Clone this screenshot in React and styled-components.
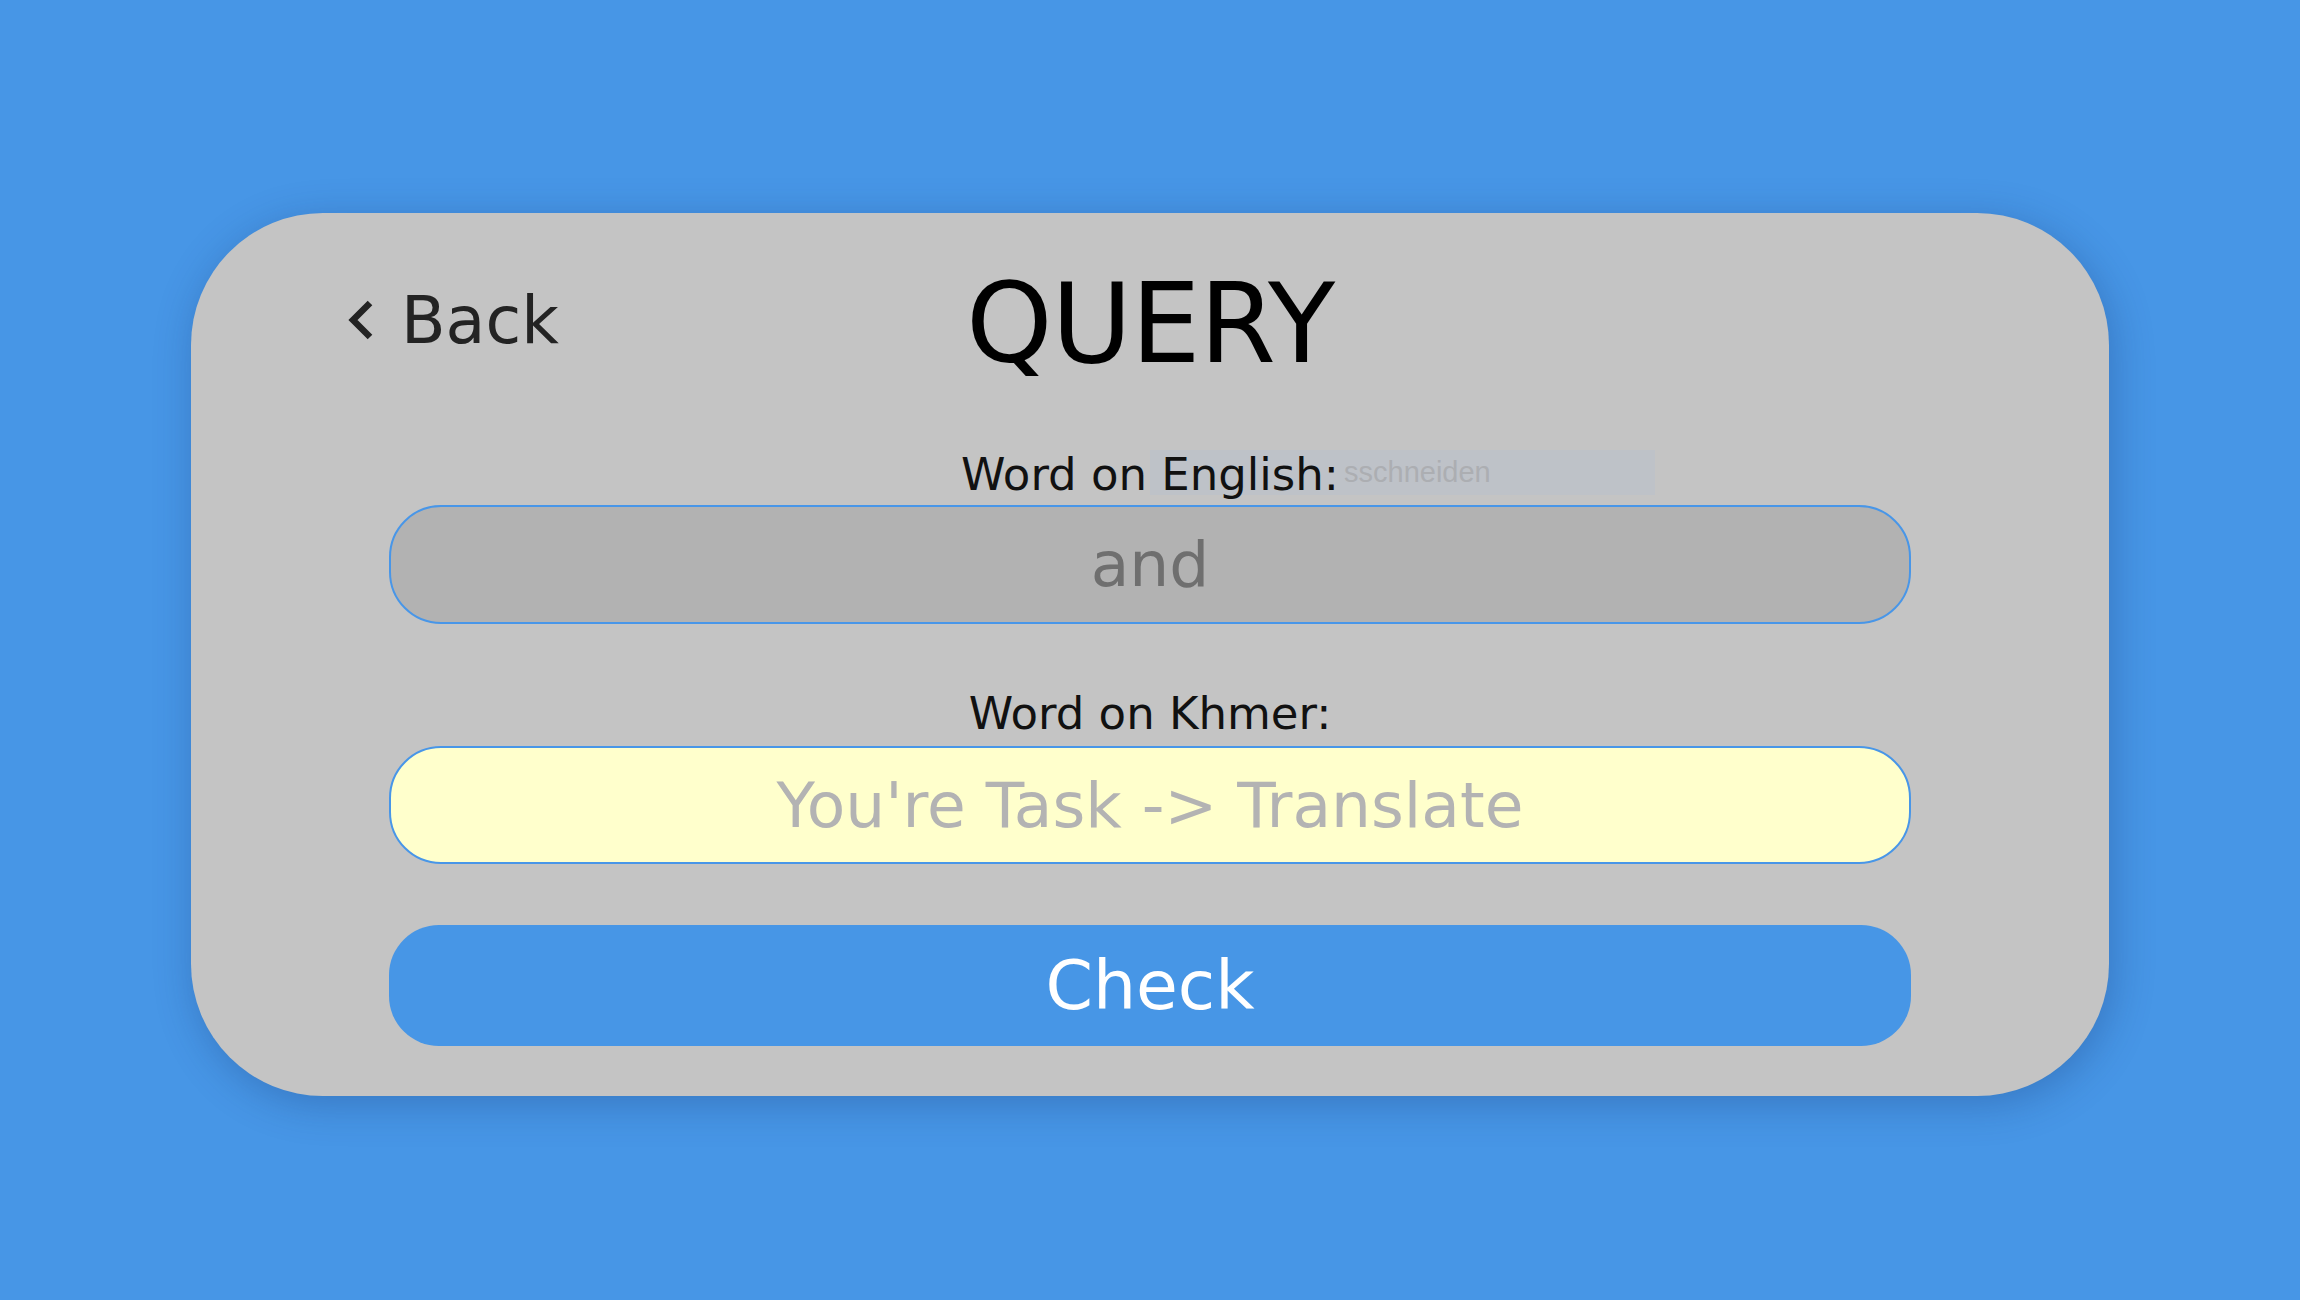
import React from "react";
import styled, { createGlobalStyle } from "styled-components";

const GlobalStyle = createGlobalStyle`
  html, body {
    margin: 0;
    padding: 0;
    background: #4796e6;
  }
  body {
    font-family: "DejaVu Sans", "Noto Sans", sans-serif;
  }
  * { box-sizing: border-box; }
`;

const Page = styled.div`
  min-height: 100vh;
  padding-top: 9px;
  display: flex;
  align-items: center;
  justify-content: center;
  background: #4796e6;
`;

const Card = styled.main`
  position: relative;
  width: 1918px;
  height: 883px;
  background: #c4c4c4;
  border-radius: 132px;
  box-shadow: 4px 8px 40px rgba(20, 50, 110, 0.3);
  padding: 56px 0 50px;
  display: flex;
  flex-direction: column;
`;

const Header = styled.header`
  display: grid;
  grid-template-columns: 1fr auto 1fr;
  align-items: center;
  padding: 0 158px;
  height: 110px;
`;

const BackLink = styled.a`
  display: flex;
  align-items: center;
  gap: 26px;
  justify-self: start;
  margin: 0 0 8px -2px;
  color: #232323;
  font-size: 65px;
  line-height: 1;
  text-decoration: none;
  cursor: pointer;
`;

const Title = styled.h1`
  margin: 0;
  font-size: 110px;
  font-weight: 400;
  line-height: 1;
  color: #000;
  letter-spacing: -1px;
`;

const Form = styled.form`
  display: flex;
  flex-direction: column;
  padding: 0 198px;
  margin-top: 73px;
`;

const Field = styled.div`
  display: flex;
  flex-direction: column;
  align-items: center;
  gap: ${(p) => p.$gap}px;
  margin-bottom: ${(p) => p.$after}px;
`;

const Label = styled.label`
  position: relative;
  z-index: 1;
  font-size: 45px;
  line-height: 1;
  color: #111;
`;

const TextInput = styled.input`
  width: 100%;
  height: ${(p) => p.$h}px;
  border: 2px solid #4896e8;
  border-radius: 52px;
  background: ${(p) => (p.$readonly ? "#b2b2b2" : "#ffffcc")};
  color: ${(p) => (p.$readonly ? "#6f6f6f" : "#222")};
  font-family: "DejaVu Sans", "Noto Sans", sans-serif;
  font-size: 63px;
  text-align: center;
  outline: none;
  padding: 0 40px;
  &::placeholder {
    color: #b3b3b3;
  }
`;

const CheckButton = styled.button`
  width: 100%;
  height: 121px;
  border: none;
  border-radius: 50px;
  background: #4796e6;
  color: #fff;
  font-family: "DejaVu Sans", "Noto Sans", sans-serif;
  font-size: 68px;
  line-height: 1;
  cursor: pointer;
`;

const SnipTip = styled.div`
  position: absolute;
  left: 959px;
  top: 237px;
  width: 505px;
  height: 45px;
  background: #bec2c8;
  z-index: 0;
`;

const SnipText = styled.span`
  position: absolute;
  left: 194px;
  top: 0;
  color: #acaeb2;
  font-family: "Liberation Sans", Arial, sans-serif;
  font-size: 29px;
  line-height: 45px;
  white-space: nowrap;
`;

function Chevron() {
  return (
    <svg width="28" height="40" viewBox="0 0 28 40" aria-hidden="true">
      <polyline
        points="23,3 6,20 23,37"
        fill="none"
        stroke="#232323"
        strokeWidth="6.5"
        strokeLinecap="butt"
        strokeLinejoin="miter"
      />
    </svg>
  );
}

export default function App() {
  return (
    <>
      <GlobalStyle />
      <Page>
        <Card>
          <Header>
            <BackLink>
              <Chevron />
              <span>Back</span>
            </BackLink>
            <Title>QUERY</Title>
            <span />
          </Header>
          <SnipTip>
            <SnipText>sschneiden</SnipText>
          </SnipTip>
          <Form onSubmit={(e) => e.preventDefault()}>
            <Field $gap={8} $after={67}>
              <Label htmlFor="en">Word on English:</Label>
              <TextInput id="en" $h={119} $readonly value="and" readOnly />
            </Field>
            <Field $gap={10} $after={61}>
              <Label htmlFor="km">Word on Khmer:</Label>
              <TextInput id="km" $h={118} placeholder="You're Task -> Translate" />
            </Field>
            <CheckButton type="submit">Check</CheckButton>
          </Form>
        </Card>
      </Page>
    </>
  );
}
